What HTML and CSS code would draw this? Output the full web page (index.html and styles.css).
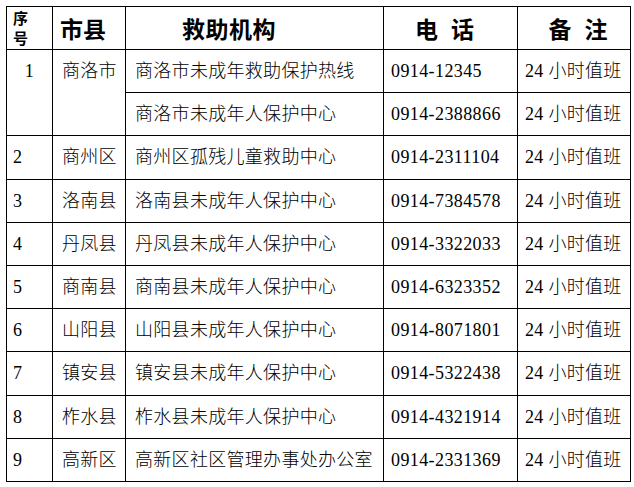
FILE: index.html
```html
<!DOCTYPE html>
<html lang="zh-CN">
<head>
<meta charset="utf-8">
<title>救助机构</title>
<link rel="stylesheet" href="styles.css">
</head>
<body>
<table class="grid">
  <colgroup>
    <col class="c1"><col class="c2"><col class="c3"><col class="c4"><col class="c5">
  </colgroup>
  <thead>
    <tr class="head">
      <th class="h-no">序<br>号</th>
      <th class="h-county">市县</th>
      <th class="h-org">救助机构</th>
      <th class="h-tel">电 话</th>
      <th class="h-note">备 注</th>
    </tr>
  </thead>
  <tbody>
    <tr>
      <td class="no first" rowspan="2">1</td>
      <td class="county first" rowspan="2">商洛市</td>
      <td class="org">商洛市未成年救助保护热线</td>
      <td class="tel">0914-12345</td>
      <td class="note">24 小时值班</td>
    </tr>
    <tr>
      <td class="org">商洛市未成年人保护中心</td>
      <td class="tel">0914-2388866</td>
      <td class="note">24 小时值班</td>
    </tr>
    <tr>
      <td class="no">2</td><td class="county">商州区</td>
      <td class="org">商州区孤残儿童救助中心</td>
      <td class="tel">0914-2311104</td><td class="note">24 小时值班</td>
    </tr>
    <tr>
      <td class="no">3</td><td class="county">洛南县</td>
      <td class="org">洛南县未成年人保护中心</td>
      <td class="tel">0914-7384578</td><td class="note">24 小时值班</td>
    </tr>
    <tr>
      <td class="no">4</td><td class="county">丹凤县</td>
      <td class="org">丹凤县未成年人保护中心</td>
      <td class="tel">0914-3322033</td><td class="note">24 小时值班</td>
    </tr>
    <tr>
      <td class="no">5</td><td class="county">商南县</td>
      <td class="org">商南县未成年人保护中心</td>
      <td class="tel">0914-6323352</td><td class="note">24 小时值班</td>
    </tr>
    <tr>
      <td class="no">6</td><td class="county">山阳县</td>
      <td class="org">山阳县未成年人保护中心</td>
      <td class="tel">0914-8071801</td><td class="note">24 小时值班</td>
    </tr>
    <tr>
      <td class="no">7</td><td class="county">镇安县</td>
      <td class="org">镇安县未成年人保护中心</td>
      <td class="tel">0914-5322438</td><td class="note">24 小时值班</td>
    </tr>
    <tr>
      <td class="no">8</td><td class="county">柞水县</td>
      <td class="org">柞水县未成年人保护中心</td>
      <td class="tel">0914-4321914</td><td class="note">24 小时值班</td>
    </tr>
    <tr>
      <td class="no">9</td><td class="county">高新区</td>
      <td class="org">高新区社区管理办事处办公室</td>
      <td class="tel">0914-2331369</td><td class="note">24 小时值班</td>
    </tr>
  </tbody>
</table>
</body>
</html>
```
FILE: styles.css
```css
html, body {
  margin: 0;
  background: #ffffff;
}
body {
  padding: 6px 0 0 6px;
}
.grid {
  border-collapse: collapse;
  table-layout: fixed;
  width: 624px;
  color: #000;
  font-family: "Liberation Serif", "Noto Sans CJK SC", serif;
  font-size: 18px;
}
.c1 { width: 46px; }
.c2 { width: 73px; }
.c3 { width: 258px; }
.c4 { width: 134px; }
.c5 { width: 113px; }

.grid th, .grid td {
  border: 1px solid #000;
  padding: 0;
  white-space: nowrap;
  overflow: hidden;
}
.grid .head {
  height: 43px;
}
.grid tbody tr {
  height: 43.2px;
}
.grid th {
  font-family: "Noto Sans CJK SC", sans-serif;
  font-weight: 700;
  font-size: 23px;
  line-height: 24px;
  vertical-align: middle;
}
.grid .h-no {
  font-size: 15px;
  line-height: 20px;
  text-align: left;
  padding-left: 6px;
}
.grid .h-county {
  text-align: left;
  padding-left: 7px;
}
.grid .h-org {
  text-align: left;
  padding-left: 56px;
  letter-spacing: 0.5px;
}
.grid .h-tel {
  text-align: center;
  padding-right: 12px;
  word-spacing: 8px;
}
.grid .h-note {
  text-align: center;
  padding-left: 8px;
  word-spacing: 8px;
}
.grid td {
  vertical-align: middle;
  line-height: 22px;
  letter-spacing: 0.3px;
  font-weight: 300;
}
.grid .no {
  padding-left: 6px;
}
.grid .county {
  padding-left: 9px;
}
.grid .org {
  padding-left: 9px;
}
.grid .tel {
  padding-left: 7px;
  letter-spacing: 0.4px;
}
.grid .note {
  padding-left: 7px;
}
.grid .first {
  vertical-align: top;
  line-height: 43px;
}
.grid .no.first {
  text-align: center;
  padding-left: 0;
}
```
